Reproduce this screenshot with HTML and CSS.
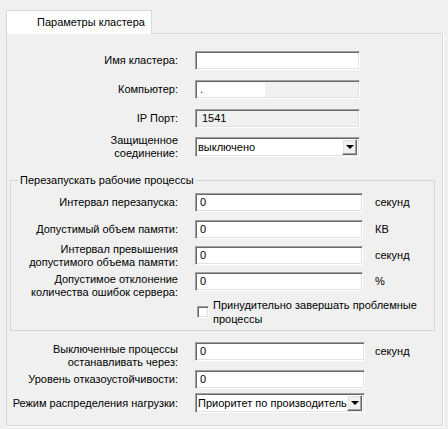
FILE: index.html
```html
<!DOCTYPE html>
<html lang="ru">
<head>
<meta charset="utf-8">
<title>Параметры кластера</title>
<link rel="stylesheet" href="styles.css">
</head>
<body>
<div class="window">
  <div class="tabs"><div class="tab">Параметры кластера</div></div>
  <div class="panel">
    <div class="row r1">
      <div class="lbl">Имя кластера:</div>
      <div class="field w165"></div>
    </div>
    <div class="row r2">
      <div class="lbl">Компьютер:</div>
      <div class="field w165 disabled"><span class="masked">.</span></div>
    </div>
    <div class="row r3">
      <div class="lbl">IP Порт:</div>
      <div class="field w165 disabled">1541</div>
    </div>
    <div class="row r4 tall">
      <div class="lbl">Защищенное<br>соединение:</div>
      <div class="combo w165"><span class="combo-text">выключено</span><span class="combo-btn"><span class="arrow"></span></span></div>
    </div>

    <fieldset class="group">
      <legend>Перезапускать рабочие процессы</legend>
      <div class="row g1">
        <div class="lbl">Интервал перезапуска:</div>
        <div class="field w168">0</div>
        <div class="unit">секунд</div>
      </div>
      <div class="row g2">
        <div class="lbl">Допустимый объем памяти:</div>
        <div class="field w168">0</div>
        <div class="unit">КВ</div>
      </div>
      <div class="row g3">
        <div class="lbl">Интервал превышения<br>допустимого объема памяти:</div>
        <div class="field w168">0</div>
        <div class="unit">секунд</div>
      </div>
      <div class="row g4">
        <div class="lbl nudge">Допустимое отклонение<br>количества ошибок сервера:</div>
        <div class="field w168">0</div>
        <div class="unit">%</div>
      </div>
      <div class="check-row">
        <span class="checkbox"></span>
        <span class="check-text">Принудительно завершать проблемные<br>процессы</span>
      </div>
    </fieldset>

    <div class="row b1">
      <div class="lbl nudge">Выключенные процессы<br>останавливать через:</div>
      <div class="field w170">0</div>
      <div class="unit u2">секунд</div>
    </div>
    <div class="row b2">
      <div class="lbl">Уровень отказоустойчивости:</div>
      <div class="field w170">0</div>
    </div>
    <div class="row b3 tall">
      <div class="lbl">Режим распределения нагрузки:</div>
      <div class="combo w170"><span class="combo-text">Приоритет по производитель</span><span class="combo-btn"><span class="arrow"></span></span></div>
    </div>
  </div>
</div>
</body>
</html>
```
FILE: styles.css
```css
* { box-sizing: border-box; }
html, body {
  margin: 0;
  padding: 0;
}
body {
  width: 448px;
  height: 429px;
  overflow: hidden;
  background: #f0f0f0;
  color: #000;
  font-family: "Liberation Sans", Arial, sans-serif;
  font-size: 11px;
  line-height: 13px;
}
.window {
  padding: 10px 0 0 6px;
}
.tabs {
  display: flex;
  position: relative;
  z-index: 1;
  margin-bottom: -1px;
}
.tab {
  width: 146px;
  height: 24px;
  background: #fff;
  border: 1px solid #d9d9d9;
  border-bottom: none;
  padding-left: 30px;
  line-height: 22px;
}
.panel {
  width: 437px;
  height: 393px;
  border: 1px solid #d9d9d9;
  box-shadow: 1px 1px 0 #fff;
  background: #f0f0f0;
}
.row {
  display: flex;
  align-items: center;
  height: 19px;
}
.row.tall { height: 20px; }
.lbl {
  flex: none;
  width: 171px;
  margin-right: 17px;
  text-align: right;
  white-space: nowrap;
}
.group .lbl { width: 167px; }
.lbl.nudge { margin-top: 8px; }

.field {
  flex: none;
  height: 19px;
  background: #fff;
  border: 1px solid;
  border-color: #a0a0a0 #fff #fff #a0a0a0;
  box-shadow: inset 1px 1px 0 #696969, inset -1px -1px 0 #e3e3e3;
  padding: 2px 3px 0 4px;
  white-space: nowrap;
  overflow: hidden;
}
.field.disabled { background: #f0f0f0; padding-left: 6px; }
.masked {
  display: block;
  width: 68px;
  height: 14px;
  margin: 0 0 0 -5px;
  background: #fff;
  padding: 0 0 0 3px;
  line-height: 12px;
}
.w165 { width: 165px; }
.w168 { width: 168px; }
.w170 { width: 170px; }
.unit { margin-left: 12px; }
.unit.u2 { margin-left: 10px; }

.combo {
  flex: none;
  display: flex;
  align-items: center;
  height: 20px;
  background: #fff;
  border: 1px solid;
  border-color: #a0a0a0 #fff #fff #a0a0a0;
  box-shadow: inset 1px 1px 0 #696969, inset -1px -1px 0 #e3e3e3;
  padding: 1px 2px 1px 1px;
}
.combo-text {
  flex: 1;
  min-width: 0;
  white-space: nowrap;
  padding-left: 1px;
}
.combo-btn {
  flex: none;
  width: 15px;
  height: 16px;
  background: #f0f0f0;
  border: 1px solid;
  border-color: #fff #696969 #696969 #fff;
  box-shadow: inset -1px -1px 0 #a0a0a0, inset 1px 1px 0 #e3e3e3;
  display: flex;
  align-items: center;
  justify-content: center;
}
.arrow {
  width: 0;
  height: 0;
  border-left: 4px solid transparent;
  border-right: 4px solid transparent;
  border-top: 4px solid #000;
}

.r1 { margin-top: 17px; }
.r2 { margin-top: 10px; }
.r3 { margin-top: 10px; }
.r4 { margin-top: 9px; }

.group {
  margin: 17px 0 0 3px;
  padding: 0 0 4px 0;
  width: 425px;
  border: 1px solid #d5d5d5;
  min-width: 0;
}
.group legend {
  margin-left: 7px;
  padding: 0 2px;
  line-height: 13px;
}
.g1 { margin-top: 6px; }
.g2 { margin-top: 8px; }
.g3 { margin-top: 7px; }
.g4 { margin-top: 7px; }

.check-row {
  display: flex;
  align-items: center;
  margin: 7px 0 0 186px;
  height: 28px;
}
.checkbox {
  flex: none;
  width: 12px;
  height: 12px;
  background: #fff;
  border: 1px solid;
  border-color: #a0a0a0 #fff #fff #a0a0a0;
  box-shadow: inset 1px 1px 0 #696969, inset -1px -1px 0 #e3e3e3;
  margin-right: 4px;
}
.check-text {
  line-height: 14px;
}

.b1 { margin-top: 11px; }
.b2 { margin-top: 9px; }
.b3 { margin-top: 4px; }
```
